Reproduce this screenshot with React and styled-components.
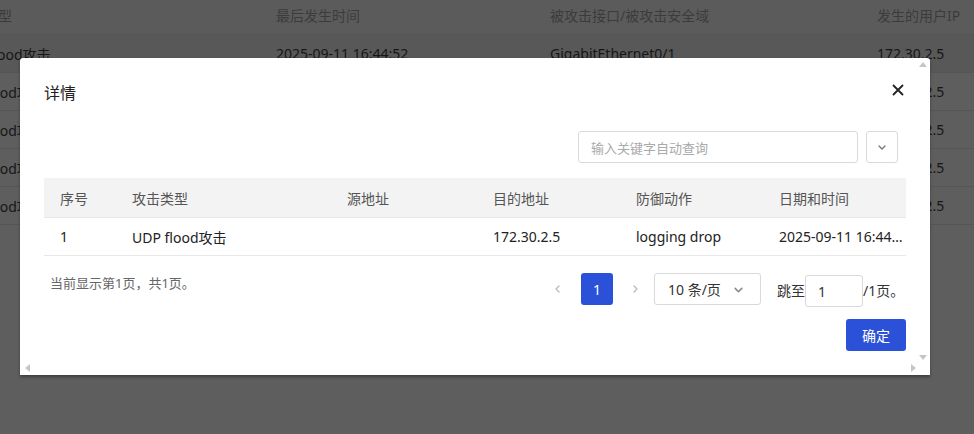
import React from "react";
import styled, { createGlobalStyle } from "styled-components";

const Global = createGlobalStyle`
  html, body { margin: 0; padding: 0; }
  body {
    width: 974px; height: 434px; overflow: hidden;
    font-family: "Noto Sans", "Noto Sans CJK SC", sans-serif;
    background: #5e5e5e;
  }
  * { box-sizing: border-box; }
`;

const Page = styled.div`
  position: relative;
  width: 974px;
  height: 434px;
  overflow: hidden;
  background: #5e5e5e;
`;

const BgTable = styled.div`
  margin-left: -44px;
  width: 1040px;
`;

const BgRow = styled.div`
  display: grid;
  grid-template-columns: 320px 274px 327px 1fr;
  height: ${(p) => (p.$head ? 35 : 38)}px;
  align-items: center;
  background: ${(p) => (p.$head ? "#5b5b5b" : p.$hover ? "#585858" : "#5e5e5e")};
  border-bottom: 1px solid #555;
  font-size: 14px;
  color: ${(p) => (p.$head ? "#3b3b3b" : "#161616")};
  white-space: nowrap;
  padding-bottom: ${(p) => (p.$head ? 4 : 0)}px;
`;

const Modal = styled.div`
  position: absolute;
  left: 20px;
  top: 58px;
  width: 910px;
  height: 317px;
  background: #fff;
  border-radius: 3px 3px 0 0;
  box-shadow: 0 2px 3px rgba(0, 0, 0, 0.35);
  display: flex;
  flex-direction: column;
  padding: 24px 24px 24px;
`;

const Header = styled.div`
  display: flex;
  align-items: center;
  justify-content: space-between;
  height: 22px;
`;

const Title = styled.div`
  font-size: 16px;
  color: #222;
  line-height: 22px;
`;

const Close = styled.div`
  width: 16px;
  height: 16px;
  margin-top: -6px;
  display: flex;
  align-items: center;
  justify-content: center;
`;

const Toolbar = styled.div`
  margin-top: 27px;
  display: flex;
  justify-content: flex-end;
  gap: 8px;
  padding-right: 8px;
`;

const Search = styled.div`
  width: 280px;
  height: 32px;
  border: 1px solid #d9d9d9;
  border-radius: 3px;
  padding-left: 12px;
  display: flex;
  align-items: center;
  font-size: 13px;
  color: #aaa;
`;

const IconBox = styled.div`
  width: 32px;
  height: 32px;
  border: 1px solid #d9d9d9;
  border-radius: 3px;
  display: flex;
  align-items: center;
  justify-content: center;
`;

const Table = styled.div`
  margin-top: 15px;
  font-size: 14px;
`;

const TRow = styled.div`
  display: grid;
  grid-template-columns: 72px 215px 146px 143px 143px 143px;
  height: ${(p) => (p.$head ? 40 : 38)}px;
  align-items: center;
  background: ${(p) => (p.$head ? "#f3f3f3" : "#fff")};
  color: ${(p) => (p.$head ? "#555" : "#222")};
  border-bottom: 1px solid #e8e8e8;
`;

const Cell = styled.div`
  padding-left: 16px;
  white-space: nowrap;
  overflow: hidden;
  text-overflow: ellipsis;
`;

const Footer = styled.div`
  margin-top: 17px;
  display: flex;
  justify-content: space-between;
  align-items: flex-start;
  padding-left: 6px;
`;

const Info = styled.div`
  font-size: 13px;
  color: #666;
  line-height: 20px;
`;

const Pager = styled.div`
  display: flex;
  align-items: flex-start;
  font-size: 14px;
  color: #333;
`;

const Arrow = styled.div`
  width: 24px;
  height: 32px;
  display: flex;
  align-items: center;
  justify-content: center;
  margin: ${(p) => p.$m};
`;

const PageBtn = styled.div`
  width: 32px;
  height: 32px;
  border-radius: 3px;
  background: #2b51d9;
  color: #fff;
  font-size: 14px;
  display: flex;
  align-items: center;
  justify-content: center;
`;

const Select = styled.div`
  width: 107px;
  height: 32px;
  border: 1px solid #d9d9d9;
  border-radius: 3px;
  display: flex;
  align-items: center;
  padding-left: 13px;
  gap: 12px;
  color: #333;
`;

const JumpLabel = styled.div`
  height: 32px;
  line-height: 32px;
  margin-left: ${(p) => p.$ml || 0}px;
  width: ${(p) => p.$w}px;
  margin-top: 2px;
  white-space: nowrap;
`;

const JumpInput = styled.div`
  width: 58px;
  height: 32px;
  margin-top: 2px;
  border: 1px solid #d9d9d9;
  border-radius: 3px;
  display: flex;
  align-items: center;
  padding-left: 12px;
`;

const Actions = styled.div`
  margin-top: 12px;
  display: flex;
  justify-content: flex-end;
`;

const Primary = styled.div`
  width: 60px;
  height: 32px;
  border-radius: 3px;
  background: #2b51d9;
  color: #fff;
  font-size: 14px;
  display: flex;
  align-items: center;
  justify-content: center;
`;

const ScrollArrow = styled.div`
  position: absolute;
  width: 0;
  height: 0;
  border: 4px solid transparent;
  ${(p) => p.$dir === "up" && `border-bottom: 5px solid #c6c6c6; border-top-width: 0; right: 3px; top: 4px;`}
  ${(p) => p.$dir === "down" && `border-top: 5px solid #c6c6c6; border-bottom-width: 0; right: 3px; bottom: 15px;`}
  ${(p) => p.$dir === "left" && `border-right: 5px solid #c6c6c6; border-left-width: 0; left: 5px; bottom: 3px;`}
  ${(p) => p.$dir === "right" && `border-left: 5px solid #c6c6c6; border-right-width: 0; right: 14px; bottom: 3px;`}
`;

const Chevron = ({ dir = "down", color = "#888", size = 10 }) => {
  const d = {
    down: "M2 4 L5 7 L8 4",
    left: "M6 2 L3 5 L6 8",
    right: "M4 2 L7 5 L4 8",
  }[dir];
  return (
    <svg width={size} height={size} viewBox="0 0 10 10">
      <path d={d} fill="none" stroke={color} strokeWidth="1.4" strokeLinecap="round" strokeLinejoin="round" />
    </svg>
  );
};

const bgRows = [
  "UDP flood攻击",
  "Ack flood攻击",
  "Ack flood攻击",
  "Ack flood攻击",
  "Ack flood攻击",
];

export default function App() {
  return (
    <Page>
      <Global />
      <BgTable>
        <BgRow $head>
          <div>攻击类型</div>
          <div>最后发生时间</div>
          <div>被攻击接口/被攻击安全域</div>
          <div>发生的用户IP</div>
        </BgRow>
        {bgRows.map((t, i) => (
          <BgRow key={i} $hover={i === 0}>
            <div>{t}</div>
            <div>2025-09-11 16:44:52</div>
            <div>GigabitEthernet0/1</div>
            <div>172.30.2.5</div>
          </BgRow>
        ))}
      </BgTable>

      <Modal>
        <Header>
          <Title>详情</Title>
          <Close>
            <svg width="12" height="12" viewBox="0 0 12 12">
              <path d="M1.5 1.5 L10.5 10.5 M10.5 1.5 L1.5 10.5" stroke="#222" strokeWidth="1.8" strokeLinecap="round" />
            </svg>
          </Close>
        </Header>
        <Toolbar>
          <Search>输入关键字自动查询</Search>
          <IconBox>
            <Chevron dir="down" color="#777" size={10} />
          </IconBox>
        </Toolbar>
        <Table>
          <TRow $head>
            <Cell>序号</Cell>
            <Cell>攻击类型</Cell>
            <Cell>源地址</Cell>
            <Cell>目的地址</Cell>
            <Cell>防御动作</Cell>
            <Cell>日期和时间</Cell>
          </TRow>
          <TRow>
            <Cell>1</Cell>
            <Cell>UDP flood攻击</Cell>
            <Cell></Cell>
            <Cell>172.30.2.5</Cell>
            <Cell>logging drop</Cell>
            <Cell>2025-09-11 16:44:52</Cell>
          </TRow>
        </Table>
        <Footer>
          <Info>当前显示第1页，共1页。</Info>
          <Pager>
            <Arrow $m="0 11px 0 0">
              <Chevron dir="left" color="#bbb" size={10} />
            </Arrow>
            <PageBtn>1</PageBtn>
            <Arrow $m="0 7px 0 10px">
              <Chevron dir="right" color="#bbb" size={10} />
            </Arrow>
            <Select>
              <span>10 条/页</span>
              <Chevron dir="down" color="#888" size={11} />
            </Select>
            <JumpLabel $ml={16} $w={28}>跳至</JumpLabel>
            <JumpInput>1</JumpInput>
            <JumpLabel $w={43}>/1页。</JumpLabel>
          </Pager>
        </Footer>
        <Actions>
          <Primary>确定</Primary>
        </Actions>
        <ScrollArrow $dir="up" />
        <ScrollArrow $dir="down" />
        <ScrollArrow $dir="left" />
        <ScrollArrow $dir="right" />
      </Modal>
    </Page>
  );
}
